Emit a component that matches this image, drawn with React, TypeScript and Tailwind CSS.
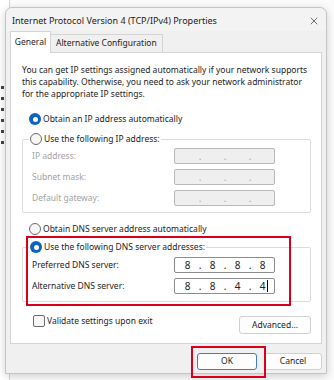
import { X } from 'lucide-react';

const font = { fontFamily: '"Noto Sans", "Open Sans", Arial, sans-serif' };

function Radio({ checked }: { checked?: boolean }) {
  if (checked) {
    return (
      <span className="flex h-[12px] w-[12px] shrink-0 items-center justify-center rounded-full bg-[#0f63c0]">
        <span className="h-[5px] w-[5px] rounded-full bg-white" />
      </span>
    );
  }
  return <span className="h-[12px] w-[12px] shrink-0 rounded-full border border-[#6b6b6b] bg-[#f7f7f7]" />;
}

function IpBox({ parts, disabled, cursor }: { parts?: string[]; disabled?: boolean; cursor?: boolean }) {
  const segs = parts ?? ['', '', '', ''];
  return (
    <div
      className={
        'flex h-[16px] w-[101px] items-center rounded-[2px] border pl-[5px] text-[10px] leading-none ' +
        (disabled ? 'border-[#b9b9b9] bg-[#efefef] text-[#a8a8a8]' : 'border-[#8c8c8c] bg-white text-[#222]')
      }
    >
      {segs.map((s, i) => (
        <div key={i} className="flex items-center">
          <span className="relative w-[15px] text-center">
            {s}
            {cursor && i === 3 && <span className="absolute right-[2px] top-[-1px] h-[12px] w-px bg-black" />}
          </span>
          {i < 3 && <span className="w-[10px] text-center">.</span>}
        </div>
      ))}
    </div>
  );
}

function Row({ label, children, disabled }: { label: string; children: React.ReactNode; disabled?: boolean }) {
  return (
    <div className="flex h-[16px] items-center">
      <span className={'w-[142px] whitespace-nowrap text-[8.5px] ' + (disabled ? 'text-[#a3a3a3]' : 'text-[#1c1c1c]')}>
        {label}
      </span>
      {children}
    </div>
  );
}

export default function App() {
  return (
    <div className="relative h-[380px] w-[334px] overflow-hidden bg-[#fbfbfb]" style={font}>
      {/* window behind the dialog */}
      <div className="absolute left-0 top-0 h-[380px] w-[10px] border-r border-[#d6d6d6] bg-white">
        <div className="ml-[1px] mt-[86px] flex flex-col gap-[8px]">
          {[0, 1, 2, 3, 4, 5].map((i) => (
            <span key={i} className="h-[3px] w-[3px] bg-[#444]" />
          ))}
        </div>
      </div>

      <div className="relative ml-[5px] mt-[7px] h-[367px] w-[322px] rounded-t-[7px] border border-[#c4c4c4] bg-[#f0f0f0] shadow-[0_2px_8px_rgba(0,0,0,0.18)]">
        {/* title bar */}
        <div className="flex h-[23px] items-center justify-between rounded-t-[7px] bg-[#f3f3f3] pl-[6px] pr-[6px] pt-[2px]">
          <span className="whitespace-nowrap text-[9px] text-[#1b1b1b]">
            Internet Protocol Version 4 (TCP/IPv4) Properties
          </span>
          <X className="h-[12px] w-[12px] text-[#333]" strokeWidth={1.4} />
        </div>

        {/* tabs */}
        <div className="ml-[4px] flex items-end">
          <div className="relative z-10 -mb-px flex h-[22px] w-[41px] items-center justify-center border border-b-0 border-[#d4d4d4] bg-white text-[8.5px] text-[#1c1c1c]">
            General
          </div>
          <div className="flex h-[18px] items-center border border-b-0 border-l-0 border-[#d4d4d4] bg-[#f0f0f0] px-[5px] text-[8.5px] text-[#1c1c1c]">
            Alternative Configuration
          </div>
        </div>

        {/* panel */}
        <div className="ml-[4px] h-[292px] w-[312px] border border-[#d4d4d4] bg-white pl-[11px] pr-[10px] pt-[11px]">
          <p className="whitespace-nowrap text-[8.5px] leading-[12px] text-[#1c1c1c]">
            You can get IP settings assigned automatically if your network supports
            <br />
            this capability. Otherwise, you need to ask your network administrator
            <br />
            for the appropriate IP settings.
          </p>

          <div className="ml-[7px] mt-[12px] flex h-[14px] items-center gap-[2px] text-[8.5px] text-[#1c1c1c]">
            <Radio checked />
            <span>Obtain an IP address automatically</span>
          </div>

          <fieldset className="mt-[6px] rounded-[2px] border border-[#dcdcdc] pb-[6px] pl-[9px] pt-[2px]">
            <legend className="-ml-[3px] flex h-[14px] items-center gap-[2px] px-px text-[8.5px] text-[#1c1c1c]">
              <Radio />
              <span>Use the following IP address:</span>
            </legend>
            <div className="flex flex-col gap-[5px]">
              <Row label="IP address:" disabled>
                <IpBox disabled />
              </Row>
              <Row label="Subnet mask:" disabled>
                <IpBox disabled />
              </Row>
              <Row label="Default gateway:" disabled>
                <IpBox disabled />
              </Row>
            </div>
          </fieldset>

          <div className="ml-[7px] mt-[9px] flex h-[14px] items-center gap-[2px] text-[8.5px] text-[#1c1c1c]">
            <Radio />
            <span>Obtain DNS server address automatically</span>
          </div>

          <fieldset className="mt-[4px] rounded-[2px] border border-[#dcdcdc] pb-[7px] pl-[9px] pt-[3px]">
            <legend className="-ml-[3px] flex h-[14px] items-center gap-[2px] px-px text-[8.5px] text-[#1c1c1c]">
              <Radio checked />
              <span>Use the following DNS server addresses:</span>
            </legend>
            <div className="flex flex-col gap-[5px]">
              <Row label="Preferred DNS server:">
                <IpBox parts={['8', '8', '8', '8']} />
              </Row>
              <Row label="Alternative DNS server:">
                <IpBox parts={['8', '8', '4', '4']} cursor />
              </Row>
            </div>
          </fieldset>

          <div className="mt-[13px] flex items-start justify-between">
            <div className="ml-[11px] flex items-center gap-[2px] text-[8.5px] text-[#1c1c1c]">
              <span className="h-[12px] w-[12px] rounded-[2px] border border-[#6b6b6b] bg-[#f7f7f7]" />
              <span>Validate settings upon exit</span>
            </div>
            <button className="mt-px flex h-[18px] w-[72px] items-center justify-center rounded-[3px] border border-[#d0d0d0] bg-[#fdfdfd] text-[8.5px] text-[#1c1c1c]">
              Advanced...
            </button>
          </div>
        </div>

        {/* buttons */}
        <div className="mr-[4px] mt-[9px] flex justify-end gap-[7px]">
          <button className="flex h-[17px] w-[60px] items-center justify-center rounded-[3px] border border-[#3c7fd0] bg-[#fdfdfd] text-[8.5px] text-[#1c1c1c]">
            OK
          </button>
          <button className="flex h-[17px] w-[58px] items-center justify-center rounded-[3px] border border-[#d0d0d0] bg-[#fdfdfd] text-[8.5px] text-[#1c1c1c]">
            Cancel
          </button>
        </div>
      </div>

      {/* red annotation boxes */}
      <div className="pointer-events-none absolute left-[26px] top-[236px] h-[70px] w-[265px] border-2 border-[#d9001b]" />
      <div className="pointer-events-none absolute left-[191px] top-[346px] h-[32px] w-[75px] border-2 border-[#d9001b]" />
    </div>
  );
}
